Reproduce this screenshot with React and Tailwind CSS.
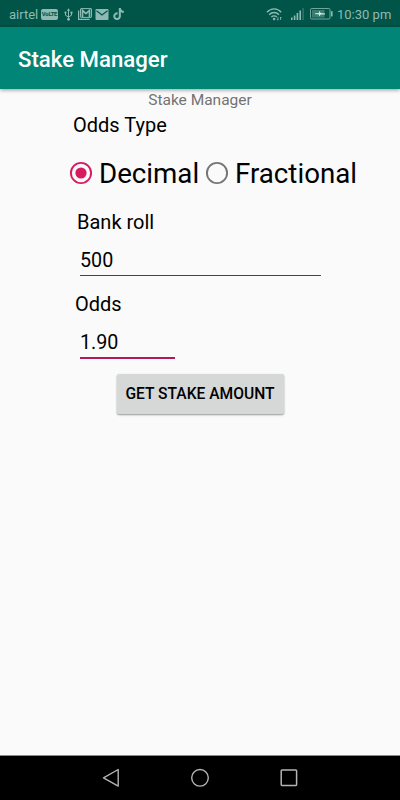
import { FaTiktok } from 'react-icons/fa6';

function StatusBar() {
  return (
    <div className="flex h-[27px] items-center bg-[#005548] pl-[9px] pr-[9px] text-[12.5px] text-[#8fbab3]">
      <span className="mt-[2px] w-[32px] whitespace-nowrap text-[13px] leading-none">airtel</span>
      <span className="mt-px flex h-[11px] w-[17px] items-center justify-center rounded-[2px] bg-[#8fbab3] text-[6px] font-bold leading-none tracking-[-0.3px] text-[#005548]">
        VoLTE
      </span>
      {/* usb */}
      <svg className="ml-[6px] mt-px h-[13px] w-[9px]" viewBox="0 0 9 13" fill="none" stroke="currentColor" strokeWidth="1">
        <path d="M4.5 2v9M1.5 5v2.3l3 1.7 3-1.7V4.5" />
        <path d="M4.5 0.3l1.6 2.4H2.9z" fill="currentColor" stroke="none" />
        <circle cx="4.5" cy="11.3" r="1.4" fill="currentColor" stroke="none" />
        <circle cx="1.5" cy="4.6" r="1.1" fill="currentColor" stroke="none" />
        <path d="M6.5 3.6h2v2h-2z" fill="currentColor" stroke="none" />
      </svg>
      {/* stacked mail */}
      <svg className="ml-[5px] mt-px h-[12px] w-[14px]" viewBox="0 0 14 12" fill="none" stroke="currentColor">
        <path d="M0.6 2.5v8.8h11" strokeWidth="1.2" />
        <rect x="2.5" y="0.6" width="11" height="8.8" rx="0.5" strokeWidth="1" />
        <path d="M4.5 9V2.4L8 5.6l3.5-3.2V9" strokeWidth="1.7" />
      </svg>
      {/* mail */}
      <svg className="ml-[3px] mt-px h-[11px] w-[14px]" viewBox="0 0 14 11">
        <rect x="0.5" y="0" width="13" height="11" rx="1" fill="currentColor" />
        <path d="M1.5 1.7L7 6l5.5-4.3" fill="none" stroke="#005548" strokeWidth="1.1" />
      </svg>
      <FaTiktok className="ml-[4px] mt-px h-[12px] w-[11px]" />

      <div className="ml-auto flex items-center">
        {/* wifi */}
        <svg className="mt-px h-[13px] w-[17px]" viewBox="0 0 17 13" fill="none" stroke="currentColor" strokeWidth="1.4">
          <path d="M1 4.2C5-0.2 11.4-0.2 15.2 4.2" />
          <path d="M3.2 6.7c2.8-3 7-3 9.8 0" />
          <path d="M5.4 9.1c1.6-1.7 3.8-1.7 5.4 0" />
          <circle cx="8.1" cy="11" r="1.3" fill="currentColor" stroke="none" />
          <path d="M12 9.2v3l-1-1.2M14.5 12V9l1 1.2" strokeWidth="0.8" />
        </svg>
        {/* signal */}
        <svg className="ml-[8px] mt-px h-[12px] w-[13px]" viewBox="0 0 13 12" fill="currentColor">
          <rect x="0" y="9.5" width="1.6" height="2.5" />
          <rect x="2.8" y="7.5" width="1.6" height="4.5" />
          <rect x="5.6" y="5" width="1.6" height="7" />
          <rect x="8.4" y="2.5" width="1.6" height="9.5" />
          <rect x="11.4" y="0" width="1.4" height="12" opacity="0.35" />
        </svg>
        {/* charging battery */}
        <svg className="ml-[6px] h-[12px] w-[23px]" viewBox="0 0 23 12">
          <rect x="0.5" y="0.5" width="19.5" height="10.5" rx="1.2" fill="none" stroke="currentColor" opacity="0.8" />
          <rect x="2" y="2" width="12.5" height="7.5" fill="currentColor" opacity="0.4" />
          <path d="M5 5.2l4 -0.2V2.8l1.8 2.2 4.2 0.6v0.8l-4.2 0.2L9 8.6V6.4l-4-0.4z" fill="#d2e6e2" />
          <rect x="21" y="3.2" width="1.6" height="5.2" fill="currentColor" />
        </svg>
        <span className="ml-[4px] mt-[2px] w-[54px] whitespace-nowrap text-[13px] leading-none">10:30 pm</span>
      </div>
    </div>
  );
}

function Radio({ label, checked, className }) {
  return (
    <label className={`flex items-center ${className}`}>
      <svg className="-mt-[3px] h-[24px] w-[24px] flex-none" viewBox="0 0 24 24">
        <circle cx="12" cy="12" r="10.1" fill="none" stroke={checked ? '#d81b60' : '#757575'} strokeWidth="1.9" />
        {checked && <circle cx="12" cy="12" r="5.6" fill="#d81b60" />}
      </svg>
      <span className="ml-[6px] whitespace-nowrap text-[27.7px] leading-[32px]">{label}</span>
    </label>
  );
}

function NavBar() {
  return (
    <div className="mt-auto flex h-[45px] items-center justify-between border-t border-[#8a8a8a] bg-black pl-[101px] pr-[101px] text-[#b4b4b4]">
      <svg className="h-[20px] w-[20px]" viewBox="0 0 20 20" fill="none" stroke="currentColor" strokeWidth="1.4" strokeLinejoin="round">
        <path d="M17.2 1.5v16.6L2.5 9.8z" />
      </svg>
      <svg className="h-[20px] w-[20px]" viewBox="0 0 20 20" fill="none" stroke="currentColor" strokeWidth="1.4">
        <circle cx="10" cy="9.8" r="8.3" />
      </svg>
      <svg className="h-[20px] w-[20px]" viewBox="0 0 20 20" fill="none" stroke="currentColor" strokeWidth="1.5">
        <rect x="2.2" y="2" width="15.4" height="15.4" rx="0.8" />
      </svg>
    </div>
  );
}

export default function App() {
  return (
    <div className="flex h-[800px] w-[400px] flex-col overflow-hidden bg-[#fafafa] font-['Roboto',sans-serif] text-black">
      <StatusBar />
      <header className="flex h-[62px] flex-none items-center bg-[#008577] pl-[18px] pt-[3px] shadow-[0_1px_4px_rgba(0,0,0,0.4)]">
        <h1 className="text-[22.2px] font-medium leading-none text-white">Stake Manager</h1>
      </header>

      <main className="flex flex-col">
        <p className="mt-[2px] text-center text-[15.5px] leading-[18px] text-[#737373]">Stake Manager</p>
        <p className="ml-[73px] mt-[4px] text-[20px] leading-[24px]">Odds Type</p>
        <div className="mt-[21px] flex h-[32px] items-center">
          <Radio label="Decimal" checked className="ml-[69px] w-[136px]" />
          <Radio label="Fractional" className="" />
        </div>
        <p className="ml-[77px] mt-[20px] text-[20px] leading-[24px]">Bank roll</p>
        <div className="ml-[80px] mt-[15px] h-[27px] w-[241px] border-b border-[#454545] text-[19.7px] leading-[24px]">
          500
        </div>
        <p className="ml-[75px] mt-[16px] text-[20px] leading-[24px]">Odds</p>
        <div className="ml-[80px] mt-[15px] h-[28px] w-[95px] border-b-2 border-[#b3195a] text-[19.7px] leading-[24px]">
          1.90
        </div>
        <button className="mx-auto mt-[15px] h-[40px] w-[167px] whitespace-nowrap rounded-[2px] bg-[#d6d7d7] pt-[2px] text-[15.6px] font-medium shadow-[0_1px_2px_rgba(0,0,0,0.4)]">
          GET STAKE AMOUNT
        </button>
      </main>

      <NavBar />
    </div>
  );
}
